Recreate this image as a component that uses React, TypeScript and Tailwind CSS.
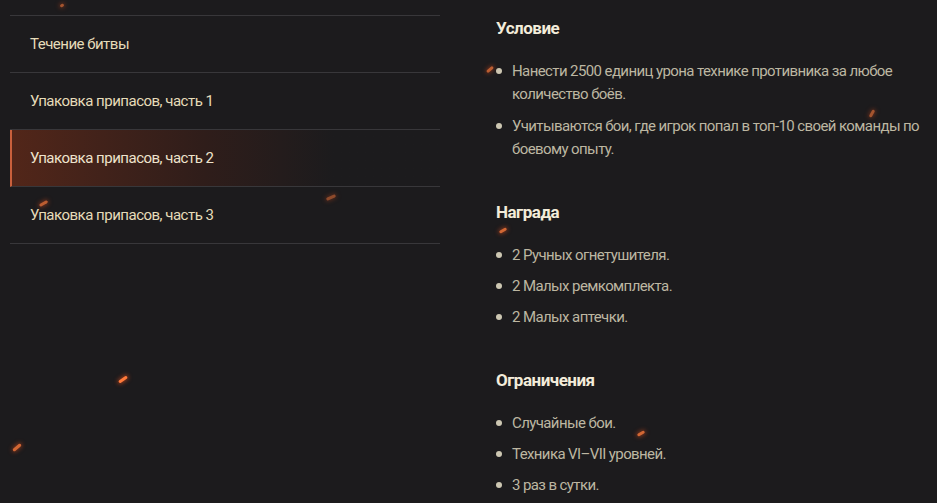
const menu = [
  "Течение битвы",
  "Упаковка припасов, часть 1",
  "Упаковка припасов, часть 2",
  "Упаковка припасов, часть 3",
];

const sections = [
  {
    title: "Условие",
    items: [
      "Нанести 2500 единиц урона технике противника за любое количество боёв.",
      "Учитываются бои, где игрок попал в топ-10 своей команды по боевому опыту.",
    ],
  },
  {
    title: "Награда",
    items: ["2 Ручных огнетушителя.", "2 Малых ремкомплекта.", "2 Малых аптечки."],
  },
  {
    title: "Ограничения",
    items: ["Случайные бои.", "Техника VI–VII уровней.", "3 раз в сутки."],
  },
];

// decorative sparks floating over the page
const sparks = [
  { x: 60, y: 4, w: 4, r: -30, o: 0.6 },
  { x: 486, y: 68, w: 8, r: -40, o: 0.7 },
  { x: 868, y: 112, w: 8, r: -60, o: 0.6 },
  { x: 326, y: 196, w: 10, r: -25, o: 0.5 },
  { x: 39, y: 202, w: 9, r: -30, o: 0.7 },
  { x: 499, y: 229, w: 8, r: -30, o: 0.8 },
  { x: 637, y: 432, w: 8, r: -30, o: 0.8 },
  { x: 118, y: 378, w: 10, r: -35, o: 1 },
  { x: 12, y: 446, w: 10, r: -40, o: 0.8 },
];

export default function App() {
  return (
    <div
      className="relative h-[503px] w-[937px] overflow-hidden bg-[#1c1b1d]"
      style={{ fontFamily: "Roboto, 'Liberation Sans', sans-serif" }}
    >
      <div className="flex">
        {/* Left: quest list */}
        <div className="ml-[10px] mt-[15px] w-[430px] border-t border-[#38373a]">
          {menu.map((label, i) => {
            const active = i === 2;
            return (
              <div
                key={label}
                className={
                  active
                    ? "flex h-[57px] items-center border-b border-l-2 border-b-[#38373a] border-l-[#c9603c] bg-gradient-to-r from-[#522619] via-[#2f1d1a] via-45% to-[#1c1b1d] to-75% pl-[18px] text-[15px] tracking-[-0.5px] text-[#eee3cc]"
                    : "flex h-[57px] items-center border-b border-[#38373a] pl-5 text-[15px] tracking-[-0.5px] text-[#e6dcb9]"
                }
              >
                {label}
              </div>
            );
          })}
        </div>

        {/* Right: quest details */}
        <div className="ml-[56px] mt-[17px] flex w-[440px] flex-col gap-[40px]">
          {sections.map((s, si) => (
            <div key={s.title}>
              <h3 className="text-[17px] font-bold leading-[22px] tracking-[-0.5px] text-[#f3ecda]">
                {s.title}
              </h3>
              <ul className={si === 0 ? "mt-[21px] flex flex-col gap-[9px]" : "mt-[21px] flex flex-col gap-2"}>
                {s.items.map((t) => (
                  <li key={t} className="flex text-[15px] leading-[23px] tracking-[-0.6px] text-[#bdb7a2]">
                    <span className="mr-[10px] mt-[8px] size-[6px] shrink-0 rounded-full bg-[#cdc7b2]" />
                    <span>{t}</span>
                  </li>
                ))}
              </ul>
            </div>
          ))}
        </div>
      </div>

      {sparks.map((s, i) => (
        <span
          key={i}
          className="absolute h-[3px] rounded-full bg-[#ff7a3a] shadow-[0_0_4px_1px_rgba(230,80,30,0.6)]"
          style={{ left: s.x, top: s.y, width: s.w, opacity: s.o, transform: `rotate(${s.r}deg)` }}
        />
      ))}
    </div>
  );
}
